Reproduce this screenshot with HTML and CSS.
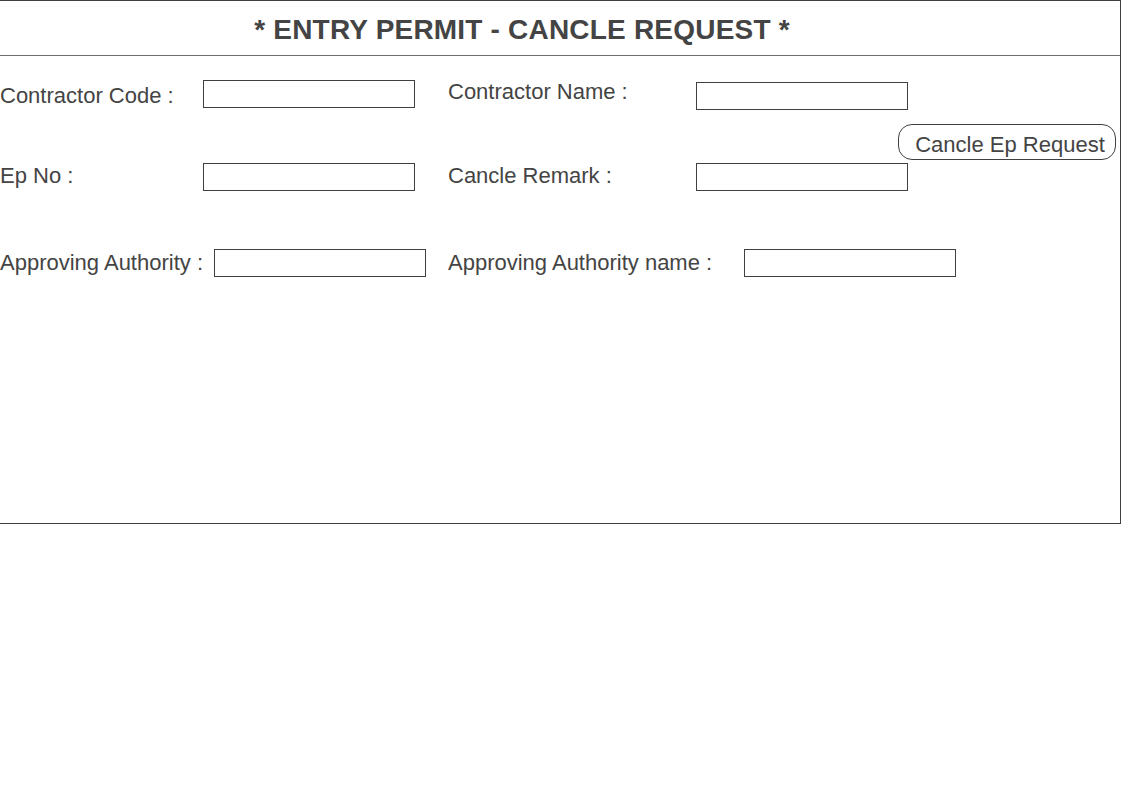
FILE: index.html
```html
<!DOCTYPE html>
<html lang="en">
<head>
    <meta charset="UTF-8">
    <title>Entry Permit - Cancle Request</title>
    <link rel="stylesheet" href="styles.css">
</head>
<body>
    <div class="permit-box">
        <div class="header">* ENTRY PERMIT - CANCLE REQUEST *</div>

        <div class="form">
            <div class="row row-first">
                <div class="field">
                    <label class="lbl lbl-col1">Contractor Code :</label>
                    <input type="text" class="box">
                </div>
                <div class="field field-col2 shift-up">
                    <label class="lbl lbl-col2">Contractor Name :</label>
                    <input type="text" class="box shift-down">
                </div>
            </div>

            <div class="action-row">
                <button class="btn-cancel">Cancle Ep Request</button>
            </div>

            <div class="row row-mid">
                <div class="field">
                    <label class="lbl lbl-col1">Ep No :</label>
                    <input type="text" class="box">
                </div>
                <div class="field field-col2">
                    <label class="lbl lbl-col2">Cancle Remark :</label>
                    <input type="text" class="box">
                </div>
            </div>

            <div class="row row-last">
                <div class="field">
                    <label class="lbl lbl-wide1">Approving Authority :</label>
                    <input type="text" class="box">
                </div>
                <div class="field field-col2">
                    <label class="lbl lbl-wide2">Approving Authority name :</label>
                    <input type="text" class="box">
                </div>
            </div>
        </div>
    </div>
</body>
</html>
```

FILE: styles.css
```css
body {
    margin: 0;
    font-family: "Liberation Sans", Arial, sans-serif;
    color: #444;
    background: #fff;
}
.permit-box {
    width: 1120px;
    height: 522px;
    border-top: 1px solid #404040;
    border-right: 1px solid #404040;
    border-bottom: 1px solid #404040;
}
.header {
    height: 54px;
    line-height: 58px;
    border-bottom: 1px solid #6e6e6e;
    text-align: center;
    padding-right: 76px;
    font-size: 28px;
    letter-spacing: 0.2px;
    font-weight: bold;
}
.form {
    padding-top: 24px;
}
.row {
    display: flex;
    align-items: center;
    height: 28px;
}
.row-mid .lbl {
    margin-top: -2px;
}
.row-last {
    margin-top: 58px;
}
.field {
    display: flex;
    align-items: center;
    flex-shrink: 0;
    width: 448px;
}
.field-col2 {
    width: auto;
}
.lbl {
    flex-shrink: 0;
    font-size: 22px;
    white-space: nowrap;
}
.lbl-col1 {
    width: 203px;
}
.lbl-col2 {
    width: 248px;
}
.lbl-wide1 {
    width: 214px;
}
.lbl-wide2 {
    width: 296px;
}
.box {
    box-sizing: border-box;
    flex-shrink: 0;
    width: 212px;
    height: 28px;
    margin: 0;
    border: 1px solid #404040;
    border-radius: 0;
    padding: 0 6px;
    font-size: 16px;
}
.shift-up .lbl {
    margin-top: -4px;
}
.shift-down {
    position: relative;
    top: 2px;
}
.row-first .field:first-child .lbl {
    margin-top: 4px;
}
.action-row {
    display: flex;
    justify-content: flex-end;
    padding-right: 4px;
    margin-top: 16px;
    margin-bottom: 3px;
}
.btn-cancel {
    width: 218px;
    height: 36px;
    padding: 5px 0 0 6px;
    background: #fff;
    border: 1px solid #404040;
    border-radius: 14px;
    font-family: "Liberation Sans", Arial, sans-serif;
    font-size: 22px;
    color: #444;
    line-height: 30px;
}
```
